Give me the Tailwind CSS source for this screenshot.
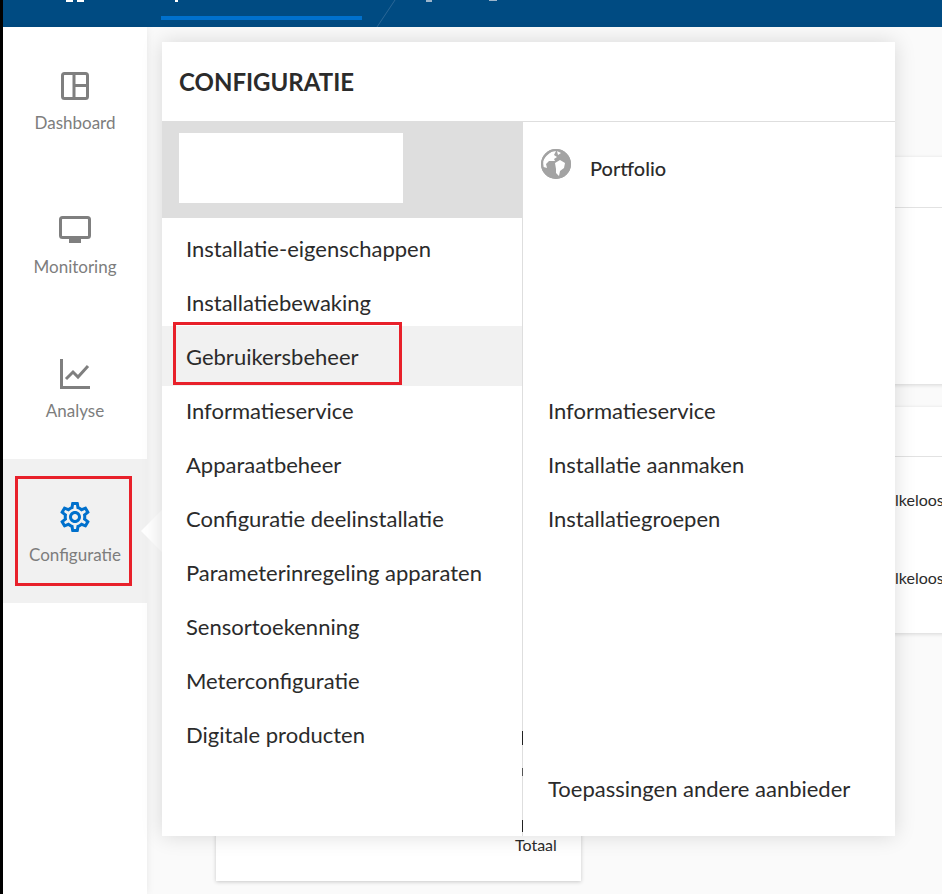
<!DOCTYPE html>
<html lang="nl">
<head>
    <meta charset="UTF-8" />
    <title>Configuratie</title>
    <script src="https://cdn.jsdelivr.net/npm/@tailwindcss/browser@4"></script>
</head>
<body class="bg-black font-['Lato','Noto_Sans',sans-serif] text-[#2b2b2b]">
    <div class="relative ml-[3px] w-[939px] h-[894px] overflow-hidden bg-[#fafafa]">

        <!-- Header -->
        <header class="relative h-[27px] bg-[#004b82]">
            <div class="absolute left-[158px] top-[16px] w-[201px] h-[4px] bg-[#0070cc]"></div>
            <div class="absolute left-[63px] top-0 w-[7px] h-[2px] bg-white"></div>
            <div class="absolute left-[74px] top-0 w-[7px] h-[2px] bg-white"></div>
            <div class="absolute left-[172px] top-0 w-[3px] h-[2px] bg-white"></div>
            <div class="absolute left-[423px] top-0 w-[6px] h-[2px] bg-[#9db6cc]"></div>
            <div class="absolute left-[486px] top-0 w-[8px] h-[1px] bg-[#9db6cc]"></div>
            <svg class="absolute left-[372px] top-0" width="22" height="27" viewBox="0 0 22 27"><path d="M20 0 L2 27" stroke="#2a6796" stroke-width="1" fill="none"/></svg>
        </header>

        <div class="flex h-[867px]">
            <!-- Sidebar -->
            <aside class="w-[144px] shrink-0 bg-white text-[#7d7d7d] text-[17px] shadow-[0_0_8px_rgba(0,0,0,0.08)] z-10">
                <a class="block h-[144px] relative">
                    <svg class="absolute left-[58px] top-[45px]" width="28" height="28" viewBox="0 0 28 28" fill="none" stroke="#7f7f7f" stroke-width="3"><rect x="1.5" y="1.5" width="25" height="25" rx="2"/><path d="M13 2V26M13 13.5H26"/></svg>
                    <span class="absolute inset-x-0 top-[84px] text-center leading-[24px]">Dashboard</span>
                </a>
                <a class="block h-[144px] relative">
                    <svg class="absolute left-[56px] top-[45px]" width="32" height="28" viewBox="0 0 32 28" fill="none"><rect x="1.5" y="1.5" width="29" height="20" rx="2" stroke="#7f7f7f" stroke-width="3"/><rect x="10" y="23" width="12" height="4" fill="#7f7f7f"/></svg>
                    <span class="absolute inset-x-0 top-[84px] text-center leading-[24px]">Monitoring</span>
                </a>
                <a class="block h-[144px] relative">
                    <svg class="absolute left-[57px] top-[44px]" width="30" height="30" viewBox="0 0 30 30" fill="none" stroke="#7f7f7f"><path d="M1.5 0V28.5H30" stroke-width="3"/><path d="M6 20L13 13L18 18L28 7" stroke-width="3"/></svg>
                    <span class="absolute inset-x-0 top-[84px] text-center leading-[24px]">Analyse</span>
                </a>
                <a class="block h-[144px] relative bg-[#f1f1f1]">
                    <svg class="absolute left-[57px] top-[43px]" width="30" height="30" viewBox="2 2 20 20" fill="#0070cc"><path d="M19.43 12.98c.04-.32.07-.64.07-.98 0-.34-.03-.66-.07-.98l2.11-1.65c.19-.15.24-.42.12-.64l-2-3.46c-.09-.16-.26-.25-.44-.25-.06 0-.12.01-.17.03l-2.49 1c-.52-.4-1.08-.73-1.69-.98l-.38-2.65C14.46 2.18 14.25 2 14 2h-4c-.25 0-.46.18-.49.42l-.38 2.65c-.61.25-1.17.59-1.69.98l-2.49-1c-.06-.02-.12-.03-.18-.03-.17 0-.34.09-.43.25l-2 3.46c-.13.22-.07.49.12.64l2.11 1.65c-.04.32-.07.65-.07.98 0 .33.03.66.07.98l-2.11 1.65c-.19.15-.24.42-.12.64l2 3.46c.09.16.26.25.44.25.06 0 .12-.01.17-.03l2.49-1c.52.4 1.08.73 1.69.98l.38 2.65c.03.24.24.42.49.42h4c.25 0 .46-.18.49-.42l.38-2.65c.61-.25 1.17-.59 1.69-.98l2.49 1c.06.02.12.03.18.03.17 0 .34-.09.43-.25l2-3.46c.12-.22.07-.49-.12-.64l-2.11-1.65zm-1.98-1.71c.04.31.05.52.05.73 0 .21-.02.43-.05.73l-.14 1.13.89.7 1.08.84-.7 1.21-1.27-.51-1.04-.42-.9.68c-.43.32-.84.56-1.25.73l-1.06.43-.16 1.13-.2 1.35h-1.4l-.19-1.35-.16-1.13-1.06-.43c-.43-.18-.83-.41-1.23-.71l-.91-.7-1.06.43-1.27.51-.7-1.21 1.08-.84.89-.7-.14-1.13c-.03-.31-.05-.54-.05-.74s.02-.43.05-.73l.14-1.13-.89-.7-1.08-.84.7-1.21 1.27.51 1.04.42.9-.68c.43-.32.84-.56 1.25-.73l1.06-.43.16-1.13.2-1.35h1.39l.19 1.35.16 1.13 1.06.43c.43.18.83.41 1.23.71l.91.7 1.06-.43 1.27-.51.7 1.21-1.07.85-.89.7.14 1.13zM12 8c-2.21 0-4 1.79-4 4s1.79 4 4 4 4-1.79 4-4-1.79-4-4-4zm0 6c-1.1 0-2-.9-2-2s.9-2 2-2 2 .9 2 2-.9 2-2 2z"/></svg>
                    <span class="absolute inset-x-0 top-[84px] text-center leading-[24px]">Configuratie</span>
                </a>
            </aside>

            <!-- Page behind the menu -->
            <main class="flex-1 min-w-0 overflow-hidden pl-[69px] pt-[130px] flex flex-col gap-[23px]">
                <section class="relative h-[227px] w-[900px] bg-white shadow-[0_1px_4px_rgba(0,0,0,0.15)]">
                    <div class="h-[51px] border-b border-[#e2e2e2]"></div>
                </section>
                <section class="h-[226px] w-[900px] bg-white shadow-[0_1px_4px_rgba(0,0,0,0.15)] text-[16px]">
                    <div class="h-[50px] border-b border-[#e2e2e2]"></div>
                    <div class="pl-[679px] pt-[31px] leading-[24px]">lkeloos</div>
                    <div class="pl-[679px] pt-[54px] leading-[24px]">lkeloos</div>
                </section>
                <section class="relative h-[225px] w-[365px] shrink-0 bg-white shadow-[0_1px_4px_rgba(0,0,0,0.2)]">
                    <span class="absolute left-[299px] top-[177px] text-[16px] leading-[24px]">Totaal</span>
                </section>
            </main>
        </div>

        <!-- Menu arrow -->
        <div class="absolute left-[138px] top-[510px] z-20 w-0 h-0 border-y-[21px] border-y-transparent border-r-[21px] border-r-white"></div>

        <!-- Configuratie menu -->
        <div class="absolute left-[159px] top-[42px] z-20 w-[733px] h-[794px] bg-white shadow-[0_0_20px_rgba(0,0,0,0.14)] flex flex-col">
            <h2 class="h-[80px] shrink-0 border-b border-[#dedede] pl-[17px] flex items-center text-[24px] font-bold">CONFIGURATIE</h2>
            <div class="flex flex-1 min-h-0 text-[22px]">
                <div class="relative w-[361px] shrink-0 border-r border-[#dedede]">
                    <div class="h-[96px] bg-[#dedede] pl-[17px] pt-[11px]">
                        <div class="w-[224px] h-[70px] bg-white"></div>
                    </div>
                    <ul class="pt-[3px]">
                        <li class="h-[54px] pl-[24px] flex items-center">Installatie-eigenschappen</li>
                        <li class="h-[54px] pl-[24px] flex items-center">Installatiebewaking</li>
                        <li class="h-[60px] -my-[3px] pl-[24px] flex items-center bg-[#f1f1f1]">Gebruikersbeheer</li>
                        <li class="h-[54px] pl-[24px] flex items-center">Informatieservice</li>
                        <li class="h-[54px] pl-[24px] flex items-center">Apparaatbeheer</li>
                        <li class="h-[54px] pl-[24px] flex items-center">Configuratie deelinstallatie</li>
                        <li class="h-[54px] pl-[24px] flex items-center">Parameterinregeling apparaten</li>
                        <li class="h-[54px] pl-[24px] flex items-center">Sensortoekenning</li>
                        <li class="h-[54px] pl-[24px] flex items-center">Meterconfiguratie</li>
                        <li class="h-[54px] pl-[24px] flex items-center">Digitale producten</li>
                    </ul>
                    <!-- bits of the page showing through -->
                    <div class="absolute right-[-1px] top-[609px] w-[1px] h-[14px] bg-[#222]"></div>
                    <div class="absolute right-[-1px] top-[646px] w-[1px] h-[8px] bg-[#555]"></div>
                    <div class="absolute right-[-1px] top-[698px] w-[1px] h-[12px] bg-[#222]"></div>
                </div>
                <div class="flex-1 pl-[25px] pt-[27px]">
                    <div class="h-[30px] flex -ml-[7px]">
                        <svg width="30" height="30" viewBox="0 0 30 30" class="shrink-0"><circle cx="15" cy="15" r="15" fill="#a3a3a3"/><path d="M2 12Q5 6 11 2.500L15 2L13 6L16 8L13 10L14 12L8 12L5 15L6 19L2.500 18Z" fill="#fff"/><path d="M14 14L19 11L24 14L23 19L19 22L18 27L15 24L15 20Z" fill="#fff"/><path d="M16 2L20 4L17 6Z" fill="#fff"/><circle cx="15" cy="15" r="14" fill="none" stroke="#a3a3a3" stroke-width="2"/></svg>
                        <span class="ml-[19px] mt-[4px] text-[20px] leading-[30px] font-medium">Portfolio</span>
                    </div>
                    <ul class="mt-[204px]">
                        <li class="h-[54px] flex items-center">Informatieservice</li>
                        <li class="h-[54px] flex items-center">Installatie aanmaken</li>
                        <li class="h-[54px] flex items-center">Installatiegroepen</li>
                        <li class="h-[54px] mt-[216px] flex items-center whitespace-nowrap">Toepassingen andere aanbieder</li>
                    </ul>
                </div>
            </div>
        </div>

        <!-- Red annotation boxes -->
        <div class="absolute left-[12px] top-[476px] z-30 w-[117px] h-[110px] border-[3px] border-[#e8202a]"></div>
        <div class="absolute left-[170px] top-[322px] z-30 w-[229px] h-[63px] border-[3px] border-[#e8202a]"></div>
    </div>
</body>
</html>
